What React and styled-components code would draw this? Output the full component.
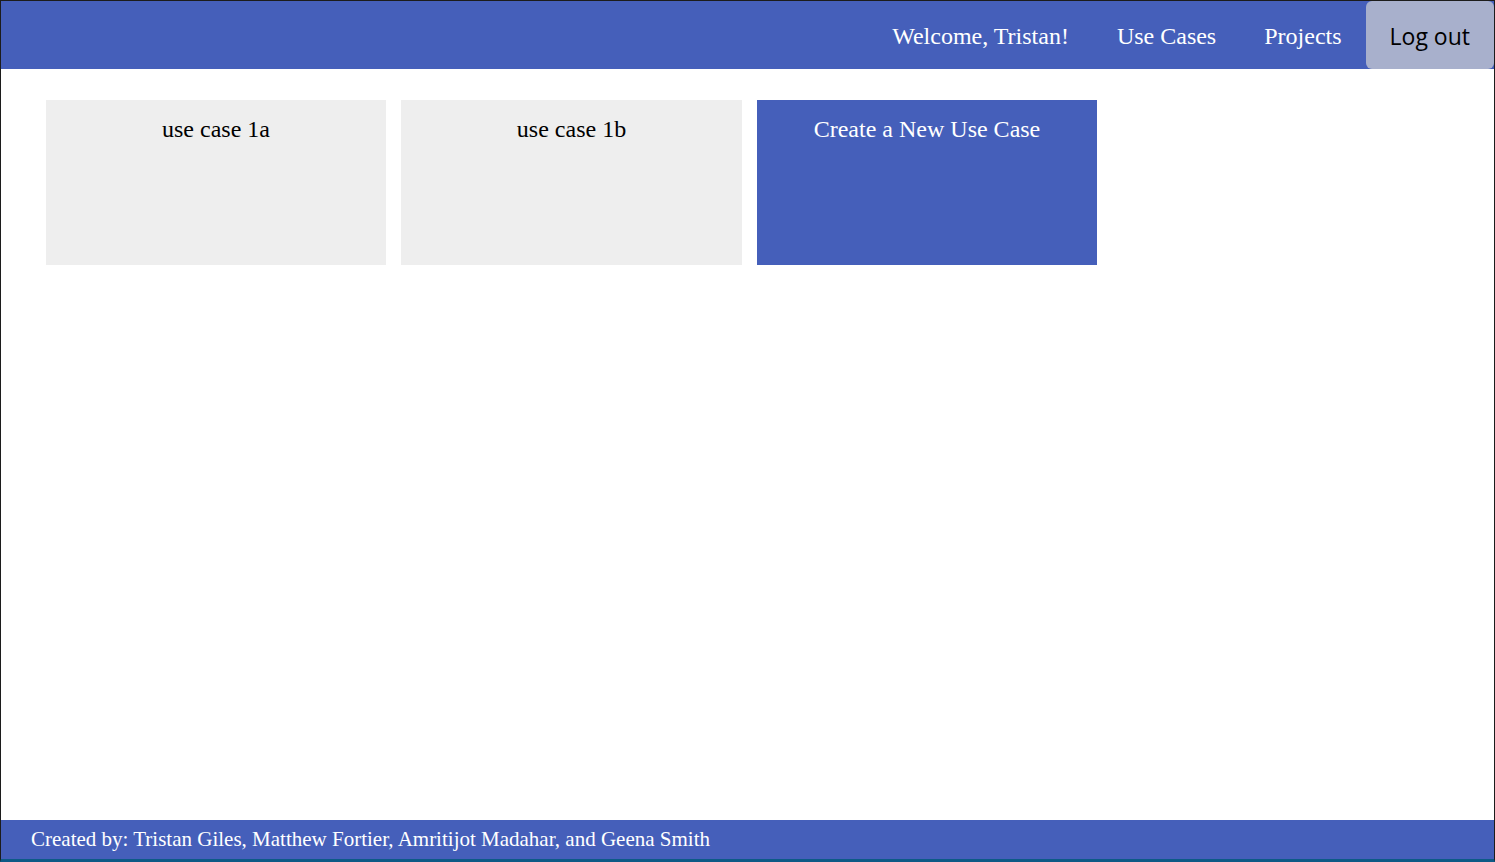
import styled, { createGlobalStyle } from 'styled-components';

const GlobalStyle = createGlobalStyle`
  html, body {
    margin: 0;
    padding: 0;
    background: #ffffff;
  }
  * {
    box-sizing: border-box;
  }
`;

const Frame = styled.div`
  display: flex;
  flex-direction: column;
  height: 862px;
  width: 1495px;
  border-top: 1px solid #1c1c1c;
  border-left: 1px solid #1c1c1c;
  border-right: 1px solid #1c1c1c;
  border-bottom: 3px solid #0d5a86;
  font-family: 'Liberation Serif', 'Times New Roman', serif;
  overflow: hidden;
`;

const Header = styled.header`
  display: flex;
  justify-content: flex-end;
  align-items: stretch;
  height: 68px;
  flex: 0 0 auto;
  background: #455fba;
`;

const NavLink = styled.a`
  display: flex;
  align-items: center;
  padding: 3px 24px 0 24px;
  color: #ffffff;
  font-size: 24px;
  text-decoration: none;
  cursor: pointer;
`;

const LogoutButton = styled.button`
  display: flex;
  align-items: center;
  padding: 1px 24px 0 24px;
  border: none;
  border-radius: 6px;
  background: #a8b0cc;
  color: #000000;
  font-family: 'Open Sans', 'Noto Sans', sans-serif;
  font-size: 23px;
  cursor: pointer;
`;

const Main = styled.main`
  flex: 1 1 auto;
  display: flex;
  align-items: flex-start;
  gap: 15px;
  padding: 31px 0 0 45px;
`;

const Card = styled.div`
  width: ${(props) => props.width || 340}px;
  height: 165px;
  padding-top: 16px;
  text-align: center;
  font-size: 24px;
  background: ${(props) => (props.primary ? '#455fba' : '#eeeeee')};
  color: ${(props) => (props.primary ? '#ffffff' : '#000000')};
  cursor: pointer;
`;

const Footer = styled.footer`
  flex: 0 0 auto;
  height: 39px;
  display: flex;
  align-items: center;
  padding: 0 0 0 30px;
  background: #455fba;
  color: #ffffff;
  font-size: 21px;
`;

const useCases = ['use case 1a', 'use case 1b'];

export default function App() {
  return (
    <>
      <GlobalStyle />
      <Frame>
        <Header>
          <NavLink>Welcome, Tristan!</NavLink>
          <NavLink>Use Cases</NavLink>
          <NavLink>Projects</NavLink>
          <LogoutButton>Log out</LogoutButton>
        </Header>
        <Main>
          {useCases.map((name, i) => (
            <Card key={name} width={i === 1 ? 341 : 340}>
              {name}
            </Card>
          ))}
          <Card primary>Create a New Use Case</Card>
        </Main>
        <Footer>
          Created by: Tristan Giles, Matthew Fortier, Amritijot Madahar, and Geena Smith
        </Footer>
      </Frame>
    </>
  );
}
